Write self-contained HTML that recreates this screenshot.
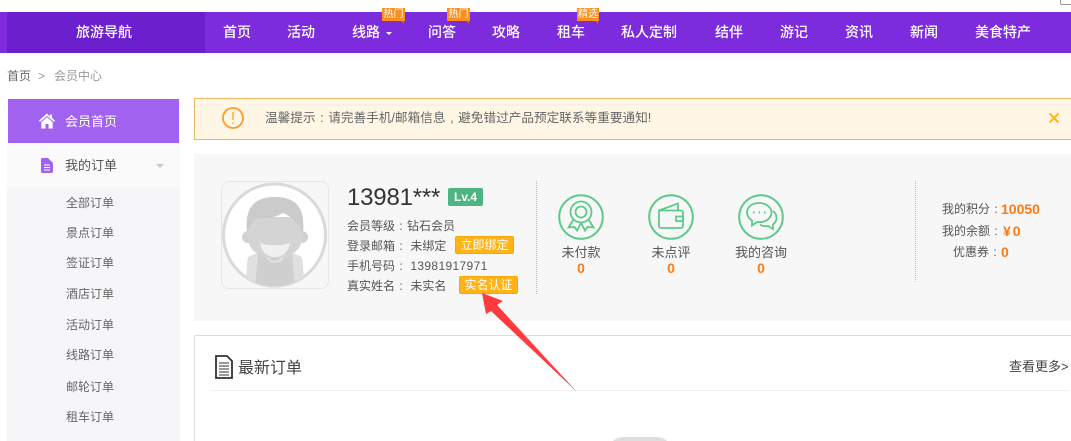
<!DOCTYPE html>
<html lang="zh-CN"><head><meta charset="utf-8"><title>会员中心</title>
<style>
html,body{margin:0;padding:0;background:#fff;width:1071px;height:441px;overflow:hidden}
#w{position:relative;width:1071px;height:441px;overflow:hidden;font-family:"Liberation Sans","Noto Sans CJK SC",sans-serif;font-size:12px;color:#555}
.b{position:absolute}
.t{position:absolute;white-space:nowrap;line-height:20px;height:20px}
.n{color:#fff;font-size:14px;font-weight:500}
.s{color:#666;font-size:12px;left:66px;width:48px}
.r{color:#555;font-size:12px}
.o{color:#ff7a0e;font-weight:700;font-size:14px}
.p{display:inline-block;width:1em;text-align:center}
.tag{position:absolute;background:#fd8f1c;color:#fff;font-size:10px;line-height:13px;height:13px;text-align:center;white-space:nowrap}
.tag:after{content:"";position:absolute;right:1px;top:13px;border-top:3px solid #d9670a;border-left:3px solid transparent}
.btn{position:absolute;background:#ffb316;border:1px solid #f5a70c;border-radius:2px;color:#fff;font-size:12px;line-height:16px;height:16px;text-align:center;white-space:nowrap;box-sizing:content-box}
.l{position:absolute;width:0;border-left:1px dotted #bbb}
.c{text-align:center;color:#555;font-size:13px}
</style></head><body><div id="w">
<!-- nav -->
<div class="b" style="left:0;top:12px;width:1071px;height:41px;background:#7d2cdd"></div>
<div class="b" style="left:7px;top:12px;width:198px;height:41px;background:#6c1fcc"></div>
<span class="t n" style="left:76px;top:22px">旅游导航</span>
<span class="t n" style="left:223px;top:22px">首页</span>
<span class="t n" style="left:287px;top:22px">活动</span>
<span class="t n" style="left:352px;top:22px">线路</span>
<div class="b" style="left:386px;top:32px;border-top:3px solid #fff;border-left:3px solid transparent;border-right:3px solid transparent"></div>
<span class="t n" style="left:428px;top:22px">问答</span>
<span class="t n" style="left:492px;top:22px">攻略</span>
<span class="t n" style="left:557px;top:22px">租车</span>
<span class="t n" style="left:621px;top:22px">私人定制</span>
<span class="t n" style="left:715px;top:22px">结伴</span>
<span class="t n" style="left:780px;top:22px">游记</span>
<span class="t n" style="left:845px;top:22px">资讯</span>
<span class="t n" style="left:910px;top:22px">新闻</span>
<span class="t n" style="left:975px;top:22px">美食特产</span>
<div class="tag" style="left:382px;top:8px;width:23px">热门</div>
<div class="tag" style="left:447px;top:8px;width:23px">热门</div>
<div class="tag" style="left:577px;top:8px;width:22px">精选</div>
<div class="b" style="left:1060px;top:0;height:4px;border-left:1px solid #999;border-bottom:1px solid #999;border-bottom-left-radius:2px;box-sizing:content-box;width:10px"></div>
<!-- breadcrumb -->
<span class="t" style="left:7px;top:66px;color:#666">首页</span>
<span class="t" style="left:38px;top:66px;color:#999">&gt;</span>
<span class="t" style="left:54px;top:66px;color:#999">会员中心</span>
<!-- sidebar -->
<div class="b" style="left:7px;top:143px;width:173px;height:44px;background:#fafafb"></div>
<div class="b" style="left:7px;top:187px;width:173px;height:254px;background:#f6f6f9"></div>
<div class="b" style="left:8px;top:99px;width:171px;height:44px;background:#a262f0"></div>
<svg class="b" style="left:39px;top:113px" width="16" height="16" viewBox="0 0 16 16"><path fill="#fff" d="M8 .5 0 7.500l1 1.500 7-6 7 6 1-1.500-3-2.600V1.500h-2.200v2.100z"/><path fill="#fff" d="M8 4.300 2.300 9.200V15.500H6.500v-4.500h3v4.500h4.200V9.200z"/></svg>
<span class="t" style="left:65px;top:112px;color:#fff;font-size:13px">会员首页</span>
<svg class="b" style="left:41px;top:158px" width="12" height="15" viewBox="0 0 12 15"><path fill="#a262f0" d="M1.500 0H7l5 5v8.500a1.500 1.500 0 0 1-1.500 1.500h-9A1.500 1.500 0 0 1 0 13.500v-12A1.500 1.500 0 0 1 1.500 0z"/><path stroke="#fff" d="M3 7h6M3 9.500h6M3 12h6"/></svg>
<span class="t" style="left:65px;top:156px;color:#555;font-size:13px">我的订单</span>
<div class="b" style="left:156px;top:164px;border-top:4px solid #c9c9c9;border-left:4px solid transparent;border-right:4px solid transparent"></div>
<span class="t s" style="top:193px">全部订单</span>
<span class="t s" style="top:223px">景点订单</span>
<span class="t s" style="top:253px">签证订单</span>
<span class="t s" style="top:284px">酒店订单</span>
<span class="t s" style="top:315px">活动订单</span>
<span class="t s" style="top:345px">线路订单</span>
<span class="t s" style="top:377px">邮轮订单</span>
<span class="t s" style="top:407px">租车订单</span>
<!-- alert -->
<div class="b" style="left:194px;top:98px;width:876px;height:40px;background:#fff6e5;border:1px solid #ebb868;border-right:none"></div>
<svg class="b" style="left:221px;top:106px" width="24" height="24" viewBox="0 0 24 24"><circle cx="12" cy="12" r="10" fill="none" stroke="#ff9a2e" stroke-width="1.800"/><path d="M12 6v8M12 16.500v1.500" stroke="#ff9a2e" stroke-width="1.300"/></svg>
<span class="t" style="left:265px;top:108px;color:#666;font-size:12.650px">温馨提示<span class="p">:</span>请完善手机/邮箱信息<span class="p">,</span>避免错过产品预定联系等重要通知!</span>
<svg class="b" style="left:1048px;top:112px" width="12" height="12" viewBox="0 0 12 12"><path d="M1.500 1.500l9 9M10.500 1.500l-9 9" stroke="#ffb81c" stroke-width="2"/></svg>
<!-- profile card -->
<div class="b" style="left:194px;top:154px;width:877px;height:167px;background:#f7f7f7"></div>
<div class="b" style="left:221px;top:181px;width:106px;height:106px;border:1px solid #e6e6e6;border-radius:8px"></div>
<svg class="b" style="left:221px;top:181px" width="107" height="107" viewBox="0 0 107 107">
<defs><clipPath id="cc"><circle cx="53.500" cy="54" r="51"/></clipPath></defs>
<circle cx="53.500" cy="54" r="51" fill="#fff" stroke="#d9d9d9" stroke-width="3"/>
<g clip-path="url(#cc)">
<path fill="#e0e0e0" d="M36 72 29 75c-3 1-3 5-4 30h58c-1-25-1-29-4-30l-7-3z"/>
<path fill="#cfcfcf" d="M37 73h34l3 34H34z"/>
<path fill="none" stroke="#e0e0e0" stroke-width="2.500" d="M46 74c0 9 16 9 16 0"/>
<circle cx="27" cy="56" r="6" fill="#d2d2d2"/><circle cx="81" cy="56" r="6" fill="#d2d2d2"/>
<path fill="#d4d4d4" d="M27 36h54v20c0 14-12 21-27 21S27 70 27 56z"/>
<path fill="#cbcbcb" d="M26 51C24 30 30 16 54 16c24 0 30 14 28 36-4-8-10-16-20-20-8 5-18 6-26 5-4 4-7 9-10 14z"/>
<path fill="#f0f0f0" d="M39 62c9 3 21 3 30 0-2 10-8 14-15 14s-13-4-15-14z"/>
</g></svg>
<span class="t" style="left:347px;top:187px;font-size:24px;color:#333;line-height:22px;letter-spacing:-.2px">13981***</span>
<div class="b" style="left:448px;top:188px;width:35px;height:18px;background:#4cb581;border-radius:2px;color:#fff;font-weight:700;font-size:12px;line-height:18px;text-align:center">Lv.4</div>
<span class="t r" style="left:347px;top:216px">会员等级<span class="p">:</span>钻石会员</span>
<span class="t r" style="left:347px;top:236px">登录邮箱<span class="p">:</span> 未绑定</span>
<div class="btn" style="left:455px;top:236px;width:57px">立即绑定</div>
<span class="t r" style="left:347px;top:256px">手机号码<span class="p">:</span> <span style="letter-spacing:.35px">13981917971</span></span>
<span class="t r" style="left:347px;top:276px">真实姓名<span class="p">:</span> 未实名</span>
<div class="btn" style="left:459px;top:276px;width:57px">实名认证</div>
<div class="l" style="left:536px;top:181px;height:113px"></div>
<!-- icons -->
<svg class="b" style="left:558px;top:194px" width="46" height="46" viewBox="0 0 46 46" fill="none" stroke="#5ec98a" stroke-width="1.800"><circle cx="23" cy="23" r="21.800" stroke-width="2"/><circle cx="23" cy="18" r="10.500"/><circle cx="23" cy="18" r="5.500"/><path d="M15.500 25.500 10.500 33.500 16.500 33 19 36.500 23 29 27 36.500 29.500 33 35.500 33.500 30.500 25.500"/></svg>
<svg class="b" style="left:648px;top:194px" width="46" height="46" viewBox="0 0 46 46" fill="none" stroke="#5ec98a" stroke-width="1.800"><circle cx="23" cy="23" r="21.800" stroke-width="2"/><path d="M11 16.500 30 9.500V16M11 16.500h22a2 2 0 0 1 2 2V32a2 2 0 0 1-2 2H13a2 2 0 0 1-2-2z"/><path d="M28 22.500h7v4.500h-7z"/></svg>
<svg class="b" style="left:738px;top:194px" width="46" height="46" viewBox="0 0 46 46" fill="none" stroke="#5ec98a" stroke-width="1.800"><circle cx="23" cy="23" r="21.800" stroke-width="2"/><path d="M21 9c-7 0-12 4-12 9.500 0 3.500 2 6 5 8v5l5-3.500c1 .2 1.500.2 2.500.2 7 0 12-4.500 12-9.700S28 9 21 9z"/><path d="M35 17c3 2 3.500 5 3.500 7 0 3-1.500 5-3.500 6.500V35l-5-3c-3 .5-6 0-8-1.500"/><path d="M15 18.500h1.500M20.500 18.500H22M26 18.500h1.500" stroke-width="2"/></svg>
<span class="t c" style="left:541px;width:80px;top:243px">未付款</span><span class="t o" style="left:541px;width:80px;top:258px;text-align:center">0</span>
<span class="t c" style="left:631px;width:80px;top:243px">未点评</span><span class="t o" style="left:631px;width:80px;top:258px;text-align:center">0</span>
<span class="t c" style="left:721px;width:80px;top:243px">我的咨询</span><span class="t o" style="left:721px;width:80px;top:258px;text-align:center">0</span>
<div class="l" style="left:915px;top:181px;height:101px"></div>
<span class="t r" style="left:942px;top:199px">我的积分<span class="p">:</span></span><span class="t o" style="left:1001px;top:199px">10050</span>
<span class="t r" style="left:942px;top:221px">我的余额<span class="p">:</span></span><span class="t o" style="left:1003px;top:221px;letter-spacing:2px">¥0</span>
<span class="t r" style="left:953px;top:242px">优惠券<span class="p">:</span></span><span class="t o" style="left:1001px;top:242px">0</span>
<!-- orders card -->
<div class="b" style="left:194px;top:335px;width:876px;height:105px;border-top:1px solid #ddd;border-left:1px solid #ddd;background:#fff"></div>
<svg class="b" style="left:215px;top:355px" width="18" height="24" viewBox="0 0 18 24" fill="none" stroke="#333"><path stroke-width="1.800" d="M1 1h11l5 5v17H1z"/><path d="M4 8h10M4 11h10M4 14h10M4 17h10M4 20h10" stroke-width="1"/></svg>
<span class="t" style="left:238px;top:359px;font-size:16px;color:#444">最新订单</span>
<span class="t" style="left:1009px;top:357px;font-size:13px;color:#444">查看更多&gt;</span>
<div class="b" style="left:211px;top:390px;width:858px;height:1px;background:#f0f0f0"></div>
<svg class="b" style="left:610px;top:434px" width="60" height="7" viewBox="0 0 60 7"><path d="M3 7C6 4 10 3 16 3h28c6 0 10 1 13 4z" fill="#ddd"/></svg>
<!-- arrow -->
<svg class="b" style="left:0;top:0;pointer-events:none" width="1071" height="441"><polygon fill="#ff3b3b" points="482,293 503,301 497,305 577,392 491,311 486,314"/></svg>
</div></body></html>
